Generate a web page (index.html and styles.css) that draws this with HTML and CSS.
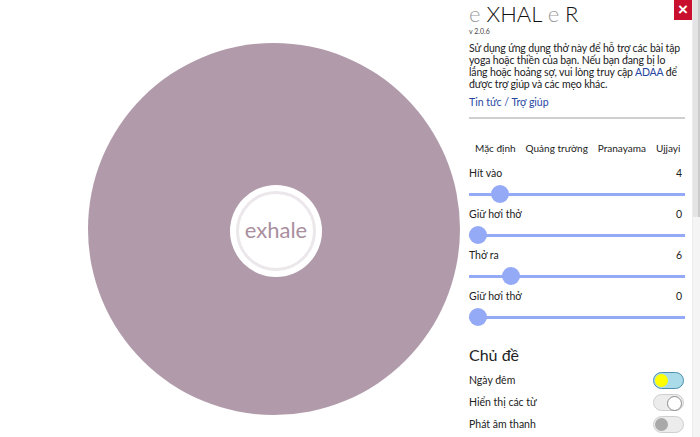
FILE: index.html
```html
<!DOCTYPE html>
<html lang="vi">
<head>
  <meta charset="UTF-8">
  <title>eXHALeR</title>
  <link rel="stylesheet" href="styles.css">
</head>
<body>

  <main class="app">
    <section class="stage">
      <div class="breath">
        <div class="core">
          <div class="ring">exhale</div>
        </div>
      </div>
    </section>

    <aside class="panel">
      <button class="close-btn">&times;</button>

      <div class="panel-body">
        <h1 class="logo"><span class="soft">e</span> XHAL <span class="soft">e</span> R</h1>
        <div class="version">v 2.0.6</div>

        <p class="intro">Sử dụng ứng dụng thở này để hỗ trợ các bài tập yoga hoặc thiền của bạn. Nếu bạn đang bị lo lắng hoặc hoảng sợ, vui lòng truy cập <a href="#">ADAA</a> để được trợ giúp và các mẹo khác.</p>

        <a class="news" href="#">Tin tức / Trợ giúp</a>

        <hr>

        <nav class="presets">
          <span>Mặc định</span>
          <span>Quảng trường</span>
          <span>Pranayama</span>
          <span>Ujjayi</span>
        </nav>

        <div class="field">
          <div class="field-head"><span>Hít vào</span><span>4</span></div>
          <input type="range" min="0" max="36" value="4">
        </div>
        <div class="field">
          <div class="field-head"><span>Giữ hơi thở</span><span>0</span></div>
          <input type="range" min="0" max="36" value="0">
        </div>
        <div class="field">
          <div class="field-head"><span>Thở ra</span><span>6</span></div>
          <input type="range" min="0" max="36" value="6">
        </div>
        <div class="field">
          <div class="field-head"><span>Giữ hơi thở</span><span>0</span></div>
          <input type="range" min="0" max="36" value="0">
        </div>

        <h2>Chủ đề</h2>

        <div class="switches">
          <div class="switch-row">
            <span>Ngày đêm</span>
            <span class="switch day"></span>
          </div>
          <div class="switch-row">
            <span>Hiển thị các từ</span>
            <span class="switch on"></span>
          </div>
          <div class="switch-row">
            <span>Phát âm thanh</span>
            <span class="switch off"></span>
          </div>
        </div>
      </div>

      <div class="scroll-track"><div class="scroll-thumb"></div></div>
    </aside>
  </main>

</body>
</html>
```

FILE: styles.css
```css
* {
  box-sizing: border-box;
}

html, body {
  margin: 0;
  height: 100%;
  overflow: hidden;
}

body {
  font-family: "Lato", "Noto Sans", sans-serif;
  color: #222;
  background: #fff;
}

.app {
  display: flex;
  height: 437px;
}

.stage {
  flex: 1;
  padding: 43px 0 0 88px;
}

.breath {
  width: 372px;
  height: 372px;
  border-radius: 50%;
  background-color: #b19bab;
  display: flex;
  align-items: center;
  justify-content: center;
}

.core {
  width: 92px;
  height: 92px;
  border-radius: 50%;
  background: #fff;
  display: flex;
  align-items: center;
  justify-content: center;
  margin: 4px 0 0 4px;
}

.ring {
  width: 80px;
  height: 80px;
  border-radius: 50%;
  border: 3px solid #ece7ea;
  display: flex;
  align-items: center;
  justify-content: center;
  color: #a98f9f;
  font-size: 22px;
  font-weight: 400;
  padding-bottom: 3px;
}

.panel {
  position: relative;
  width: 240px;
  height: 437px;
  display: flex;
  overflow: hidden;
}

.panel-body {
  flex: 1;
  padding: 0 7px 0 9px;
}

.scroll-track {
  width: 8px;
  background: #f4f4f4;
  border-left: 1px solid #ececec;
}

.scroll-thumb {
  height: 217px;
  background: #e4e4e4;
  border-right: 2px solid #cbcbcb;
}

.close-btn {
  position: absolute;
  top: 0;
  right: 8px;
  width: 18px;
  height: 20px;
  padding: 0;
  border: none;
  background-color: #c8102e;
  color: #fff;
  font-size: 17px;
  font-weight: bold;
  line-height: 18px;
  cursor: pointer;
}

.logo {
  margin: 0;
  padding-top: 2px;
  font-size: 22px;
  font-weight: 300;
  line-height: 24px;
  color: #111;
}

.logo .soft {
  color: #9a9a9a;
}

.version {
  font-size: 7px;
  color: #444;
  margin-top: 1px;
}

.intro {
  margin: 7px 0 0;
  font-size: 10.5px;
  line-height: 12px;
  letter-spacing: -0.15px;
}

a {
  color: #2746a0;
  text-decoration: none;
}

.news {
  display: block;
  font-size: 10.5px;
  margin-top: 6px;
}

hr {
  margin: 9px 0 0;
  border: none;
  border-top: 2px solid #cfcfcf;
}

.presets {
  display: flex;
  gap: 10px;
  padding-left: 6px;
  margin-top: 23px;
  font-size: 10px;
}

.field {
  margin-top: 13px;
}

.field + .field {
  margin-top: 5px;
}

.field-head {
  display: flex;
  justify-content: space-between;
  font-size: 10.5px;
  padding-right: 3px;
}

.field input[type="range"] {
  -webkit-appearance: none;
  appearance: none;
  display: block;
  width: 100%;
  height: 18px;
  margin: 6px 0 0;
  background: transparent;
}

.field input[type="range"]::-webkit-slider-runnable-track {
  height: 3px;
  background: #94aaf6;
}

.field input[type="range"]::-webkit-slider-thumb {
  -webkit-appearance: none;
  width: 18px;
  height: 18px;
  margin-top: -7.5px;
  border-radius: 50%;
  background: #94aaf6;
  border: none;
}

h2 {
  margin: 19px 0 0;
  font-size: 16px;
  font-weight: 400;
}

.switches {
  margin-top: 5px;
}

.switch-row {
  display: flex;
  justify-content: space-between;
  align-items: center;
  font-size: 10.5px;
  height: 22px;
}

.switch {
  position: relative;
  width: 31px;
  height: 17px;
  border-radius: 9px;
  border: 1px solid #cfcfcf;
  background: #ececec;
  margin-right: 1px;
}

.switch::after {
  content: "";
  position: absolute;
  top: 1px;
  width: 13px;
  height: 13px;
  border-radius: 50%;
}

.switch.day {
  background: #a9dbe9;
  border: 1.5px solid #4c8fae;
}

.switch.day::after {
  left: 1px;
  background: #ffff00;
}

.switch.on::after {
  right: 1px;
  background: #fff;
  border: 1.5px solid #8c8c8c;
}

.switch.off::after {
  left: 1px;
  background: #a9a9a9;
}
```
